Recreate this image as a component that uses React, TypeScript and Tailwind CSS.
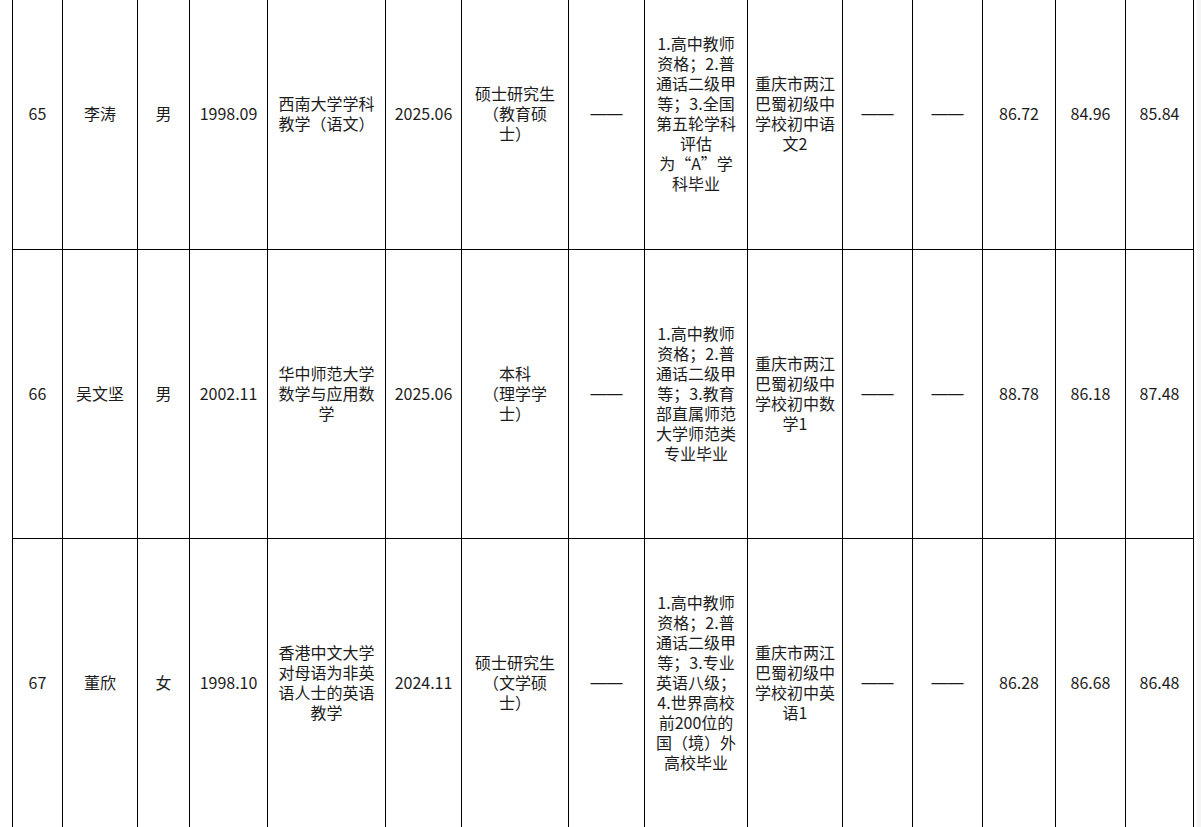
import React from "react";

type Row = {
  no: string;
  name: string;
  sex: string;
  birth: string;
  school: string[];
  grad: string;
  degree: string[];
  qual: string[];
  post: string[];
  scores: [string, string, string];
  height: string;
};

const colWidths = [50, 75, 52, 78, 118, 76, 107, 76, 103, 95, 70, 70, 73, 70, 68];

const rows: Row[] = [
  {
    no: "65",
    name: "李涛",
    sex: "男",
    birth: "1998.09",
    school: ["西南大学学科", "教学（语文）"],
    grad: "2025.06",
    degree: ["硕士研究生", "（教育硕", "士）"],
    qual: ["1.高中教师", "资格；2.普", "通话二级甲", "等；3.全国", "第五轮学科", "评估", "为“A”学", "科毕业"],
    post: ["重庆市两江", "巴蜀初级中", "学校初中语", "文2"],
    scores: ["86.72", "84.96", "85.84"],
    height: "h-[270px]",
  },
  {
    no: "66",
    name: "吴文坚",
    sex: "男",
    birth: "2002.11",
    school: ["华中师范大学", "数学与应用数", "学"],
    grad: "2025.06",
    degree: ["本科", "（理学学", "士）"],
    qual: ["1.高中教师", "资格；2.普", "通话二级甲", "等；3.教育", "部直属师范", "大学师范类", "专业毕业"],
    post: ["重庆市两江", "巴蜀初级中", "学校初中数", "学1"],
    scores: ["88.78", "86.18", "87.48"],
    height: "h-[289px]",
  },
  {
    no: "67",
    name: "董欣",
    sex: "女",
    birth: "1998.10",
    school: ["香港中文大学", "对母语为非英", "语人士的英语", "教学"],
    grad: "2024.11",
    degree: ["硕士研究生", "（文学硕", "士）"],
    qual: ["1.高中教师", "资格；2.普", "通话二级甲", "等；3.专业", "英语八级；", "4.世界高校", "前200位的", "国（境）外", "高校毕业"],
    post: ["重庆市两江", "巴蜀初级中", "学校初中英", "语1"],
    scores: ["86.28", "86.68", "86.48"],
    height: "h-[290px]",
  },
];

function Lines({ lines }: { lines: string[] }) {
  return (
    <>
      {lines.map((l, i) => (
        <div key={i} className="whitespace-nowrap">
          {l}
        </div>
      ))}
    </>
  );
}

const cell = "border border-black px-0 pb-[3px] pt-0 text-center align-middle";

function Dash() {
  return <span className="font-['Liberation_Sans',sans-serif]">——</span>;
}

export default function App() {
  return (
    <div
      className="h-[827px] w-[1201px] overflow-hidden bg-white text-[#1c1c1c]"
      style={{ fontFamily: '"Noto Sans CJK SC", "Noto Sans", sans-serif' }}
    >
      <div className="-mt-[21px] ml-[12px] flex items-start">
        <table className="w-[1182px] table-fixed border-collapse text-[16px] leading-[20px]">
          <colgroup>
            {colWidths.map((w, i) => (
              <col key={i} style={{ width: w }} />
            ))}
          </colgroup>
          <tbody>
            {rows.map((r) => (
              <tr key={r.no} className={r.height}>
                <td className={cell}>{r.no}</td>
                <td className={cell}>{r.name}</td>
                <td className={cell}>{r.sex}</td>
                <td className={cell}>{r.birth}</td>
                <td className={cell}>
                  <Lines lines={r.school} />
                </td>
                <td className={cell}>{r.grad}</td>
                <td className={cell}>
                  <Lines lines={r.degree} />
                </td>
                <td className={cell}>
                  <Dash />
                </td>
                <td className={cell}>
                  <Lines lines={r.qual} />
                </td>
                <td className={cell}>
                  <Lines lines={r.post} />
                </td>
                <td className={cell}>
                  <Dash />
                </td>
                <td className={cell}>
                  <Dash />
                </td>
                <td className={cell}>{r.scores[0]}</td>
                <td className={cell}>{r.scores[1]}</td>
                <td className={cell}>{r.scores[2]}</td>
              </tr>
            ))}
          </tbody>
        </table>
        <div className="ml-[3px] h-[900px] w-[5px] bg-[#f5f5f5]" />
      </div>
    </div>
  );
}
